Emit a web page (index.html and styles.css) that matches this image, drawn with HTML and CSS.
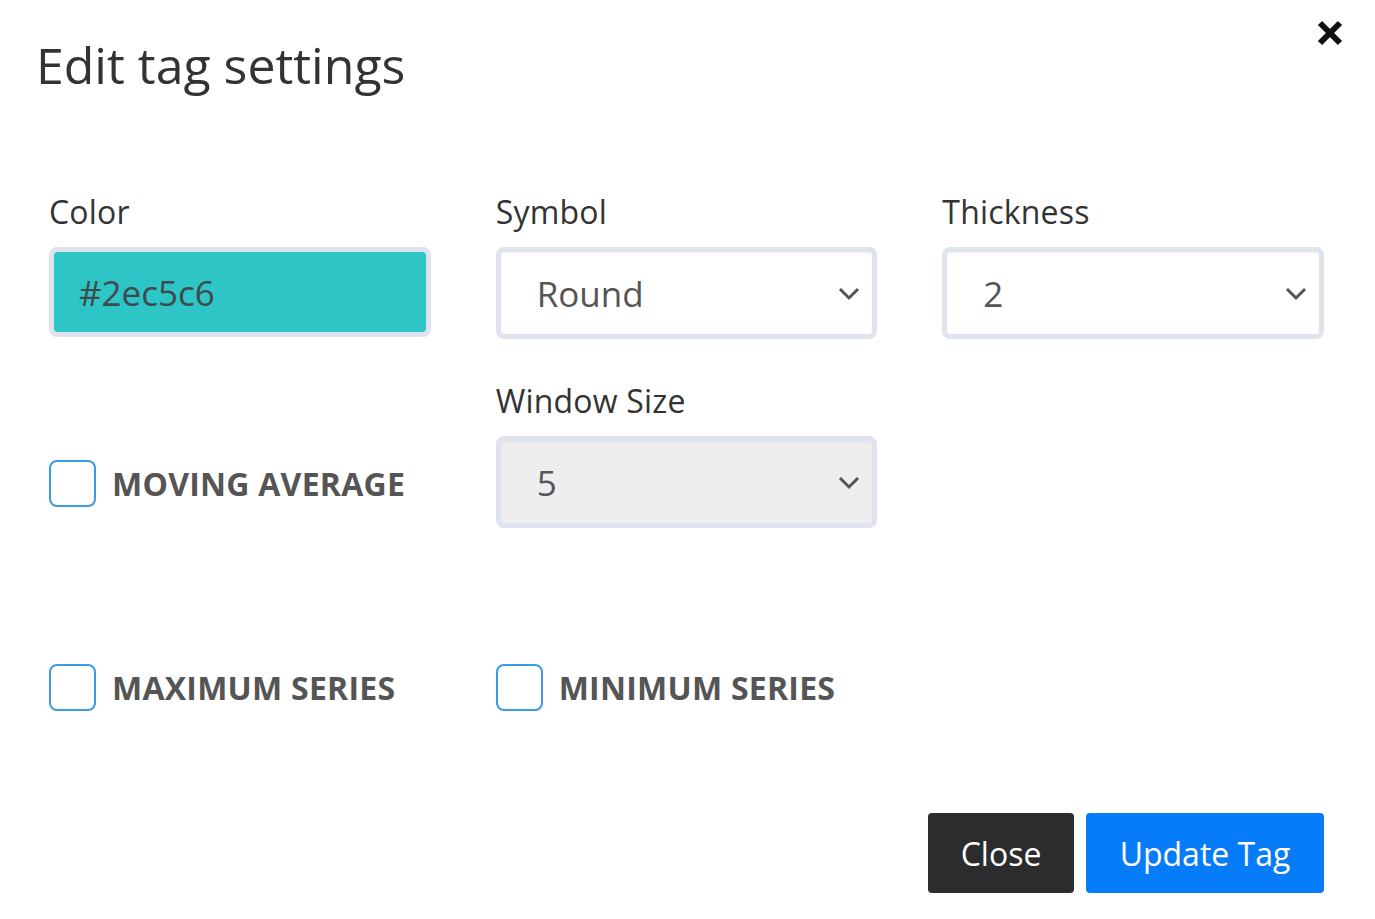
FILE: index.html
```html
<!DOCTYPE html>
<html lang="en">
<head>
<meta charset="utf-8">
<title>Edit tag settings</title>
<link rel="stylesheet" href="styles.css">
</head>
<body>
<div class="modal">
  <div class="modal-header">
    <h1 class="modal-title">Edit tag settings</h1>
    <button class="close-btn" aria-label="Close">
      <svg width="28" height="28" viewBox="0 0 28 28"><path d="M4 4 L24 24 M24 4 L4 24" stroke="#111" stroke-width="6" stroke-linecap="butt"/></svg>
    </button>
  </div>
  <div class="modal-body">
    <div class="row row-top">
      <div class="field">
        <label class="field-label">Color</label>
        <div class="color-input">#2ec5c6</div>
      </div>
      <div class="field">
        <label class="field-label">Symbol</label>
        <div class="select"><span>Round</span><svg class="chev" width="22" height="14" viewBox="0 0 22 14"><path d="M2 2 L11 11 L20 2" fill="none" stroke="#555" stroke-width="3"/></svg></div>
      </div>
      <div class="field">
        <label class="field-label">Thickness</label>
        <div class="select"><span>2</span><svg class="chev" width="22" height="14" viewBox="0 0 22 14"><path d="M2 2 L11 11 L20 2" fill="none" stroke="#555" stroke-width="3"/></svg></div>
      </div>
    </div>
    <div class="row row-mid">
      <label class="check check-end"><input type="checkbox"><span>MOVING AVERAGE</span></label>
      <div class="field">
        <label class="field-label">Window Size</label>
        <div class="select disabled"><span>5</span><svg class="chev" width="22" height="14" viewBox="0 0 22 14"><path d="M2 2 L11 11 L20 2" fill="none" stroke="#555" stroke-width="3"/></svg></div>
      </div>
      <div></div>
    </div>
    <div class="row row-bottom">
      <label class="check"><input type="checkbox"><span>MAXIMUM SERIES</span></label>
      <label class="check"><input type="checkbox"><span>MINIMUM SERIES</span></label>
      <div></div>
    </div>
  </div>
  <div class="modal-footer">
    <button class="btn btn-dark">Close</button>
    <button class="btn btn-primary">Update Tag</button>
  </div>
</div>
</body>
</html>
```
FILE: styles.css
```css
* { box-sizing: border-box; }
html, body { margin: 0; padding: 0; background: #fff; }
body {
  font-family: "Open Sans", "Liberation Sans", sans-serif;
  color: #333;
  width: 1375px;
  height: 919px;
  overflow: hidden;
}
.modal { width: 1375px; }
.modal-header {
  display: flex;
  justify-content: space-between;
  align-items: flex-start;
  padding: 35px 31px 0 36px;
}
.modal-title {
  margin: 0;
  font-size: 50px;
  line-height: 60px;
  font-weight: 400;
  color: #333;
}
.close-btn {
  margin-top: -16px;
  padding: 0;
  border: 0;
  background: none;
  width: 28px;
  height: 28px;
  display: flex;
}
.modal-body {
  padding: 97px 51px 0 49px;
}
.row {
  display: grid;
  grid-template-columns: 1fr 1fr 1fr;
  column-gap: 65px;
}
.row-mid { margin-top: 42px; }
.row-bottom { margin-top: 136px; }
.field { display: flex; flex-direction: column; }
.field-label {
  font-size: 32px;
  line-height: 40px;
  color: #333;
  margin-bottom: 15px;
  letter-spacing: 0.2px;
}
.color-input {
  height: 90px;
  border: 5px solid #dfe3ee;
  border-radius: 8px;
  background: #2ec5c6;
  background-clip: padding-box;
  display: flex;
  align-items: center;
  padding-left: 25px;
  font-size: 35px;
  color: #3e4a4d;
}
.select {
  height: 92px;
  border: 5px solid #dfe3ee;
  border-radius: 8px;
  background: #fff;
  display: flex;
  align-items: center;
  justify-content: space-between;
  padding: 0 12px 0 36px;
  font-size: 35px;
  color: #555;
  box-shadow: inset 0 2px 3px rgba(0,0,0,0.04);
}
.select.disabled { background: #eeeeee; }
.chev { display: block; margin-top: 2px; }
.check {
  display: flex;
  align-items: center;
  gap: 16px;
  font-size: 32px;
  font-weight: 700;
  color: #555;
  line-height: 47px;
  letter-spacing: 0.25px;
}
.check-end { align-self: end; margin-bottom: 21px; }
.check input {
  appearance: none;
  -webkit-appearance: none;
  margin: 0;
  width: 47px;
  height: 47px;
  border: 2px solid #3b9ae1;
  border-radius: 8px;
  background: #fff;
  flex: none;
}
.modal-footer {
  display: flex;
  justify-content: flex-end;
  gap: 12px;
  padding: 102px 51px 0 0;
}
.btn {
  height: 80px;
  border: 0;
  border-radius: 4px;
  padding: 0 32px;
  font-family: inherit;
  font-size: 32px;
  color: #fff;
}
.btn-dark { background: #2b2c2e; width: 146px; }
.btn-primary { background: #077cf8; width: 238px; }
```
